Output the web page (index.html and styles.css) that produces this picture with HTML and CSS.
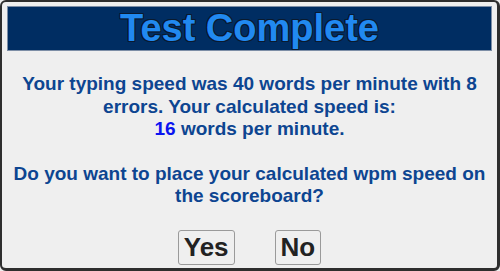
FILE: index.html
```html
<!DOCTYPE html>
<html lang="en">
<head>
  <meta charset="UTF-8" />
  <title>Test Complete</title>
  <link rel="stylesheet" href="styles.css">
</head>
<body>
  <div class="dialog">
    <header>
      <h1>Test Complete</h1>
    </header>
    <div class="message">
      <p>Your typing speed was 40 words per minute with 8 errors. Your calculated speed is:<br />
        <span class="speed">16</span> words per minute.</p>
      <p>Do you want to place your calculated wpm speed on the scoreboard?</p>
    </div>
    <div class="actions">
      <button onclick="alert('Saved')">Yes</button>
      <button onclick="alert('Skipped')">No</button>
    </div>
  </div>
</body>
</html>
```

FILE: styles.css
```css
* {
  box-sizing: border-box;
  margin: 0;
  padding: 0;
  font-family: "Liberation Sans", Arial, sans-serif;
}
body {
  background-color: #efefef;
}
.dialog {
  height: 271px;
  border: 2px solid #2e2e2e;
  border-right-width: 3px;
  border-bottom-width: 3px;
  border-radius: 6px;
  padding: 4px 5px;
  background-color: #efefef;
}
header {
  background-color: #002d62;
  border: 1px solid #7d8ea6;
  height: 45px;
  text-align: center;
}
header h1 {
  font-size: 38px;
  line-height: 43px;
  color: #2189f0;
  text-shadow: -1px 0 #0a1a2e, 1px 0 #0a1a2e, 0 -1px #0a1a2e, 0 1px #0a1a2e,
    -1px -1px #0a1a2e, 1px 1px #0a1a2e, 1px -1px #0a1a2e, -1px 1px #0a1a2e;
}
.message {
  padding: 22px 6px 0;
  text-align: center;
  color: #0d4591;
  font-size: 19px;
  font-weight: bold;
  line-height: 22.5px;
}
.message p {
  margin-bottom: 22px;
}
.speed {
  color: #0a14f0;
}
.actions {
  display: flex;
  justify-content: center;
  gap: 40px;
  margin-top: 11px;
}
.actions button {
  font-size: 26px;
  font-weight: bold;
  color: #222;
  background-color: #efefef;
  border: 1px solid #9a9a9a;
  border-radius: 3px;
  padding: 1px 5px;
  cursor: pointer;
}
```
